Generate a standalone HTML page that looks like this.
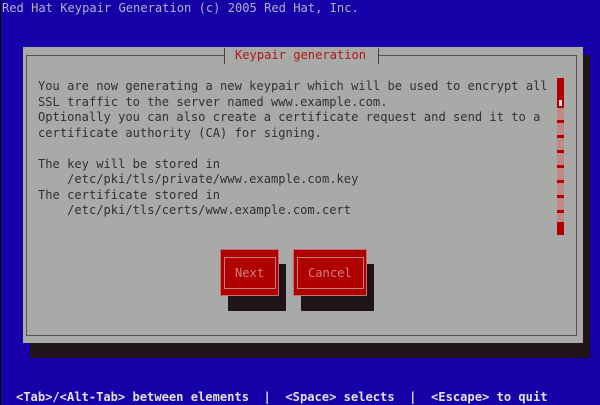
<!DOCTYPE html>
<html><head><style>
*{margin:0;padding:0;box-sizing:border-box}
body{width:600px;height:405px;background:#1800a8;position:relative;overflow:hidden;font-family:"DejaVu Sans Mono","Liberation Mono",monospace;font-size:12.1px}
.a{position:absolute}
.t{position:absolute;white-space:pre;line-height:16px}
</style></head><body>
<div class="a" style="left:0;top:0;width:1px;height:405px;background:#000"></div>
<div class="t" style="left:2px;top:0;color:#b0b0d0">Red Hat Keypair Generation (c) 2005 Red Hat, Inc.</div>
<div class="a" style="left:30px;top:55px;width:560px;height:303px;background:#201418"></div>
<div class="a" style="left:23px;top:47px;width:560px;height:296px;background:#a8aaa8"></div>
<div class="a" style="left:26px;top:55px;width:551px;height:281px;border:1px solid #5a5050"></div>
<div class="a" style="left:224px;top:48px;width:155px;height:16px;background:#a8aaa8;border-left:1px solid #4a4040;border-right:1px solid #4a4040"></div>
<div class="t" style="left:235px;top:47px;color:#b01818">Keypair generation</div>
<div class="t" style="left:38px;top:79px;color:#303030;line-height:15.5px">You are now generating a new keypair which will be used to encrypt all
SSL traffic to the server named www.example.com.
Optionally you can also create a certificate request and send it to a
certificate authority (CA) for signing.

The key will be stored in
    /etc/pki/tls/private/www.example.com.key
The certificate stored in
    /etc/pki/tls/certs/www.example.com.cert</div>
<div class="a" style="left:557px;top:78px;width:7px;height:157px;background:repeating-linear-gradient(#c08888 0 12px,#b00000 12px 15px)"></div>
<div class="a" style="left:557px;top:78px;width:7px;height:30px;background:#b00000"></div>
<div class="a" style="left:559px;top:100px;width:3px;height:6px;background:#ddd"></div>
<div class="a" style="left:557px;top:222px;width:7px;height:13px;background:#b00000"></div>
<div class="a" style="left:228px;top:264px;width:58px;height:47px;background:#201418"></div>
<div class="a" style="left:220px;top:249px;width:59px;height:47px;background:#b00000;border:1px solid #c07070"></div>
<div class="a" style="left:224px;top:257px;width:52px;height:32px;border:1px solid #c08080"></div>
<div class="t" style="left:235px;top:265px;color:#c88080">Next</div>
<div class="a" style="left:301px;top:264px;width:73px;height:47px;background:#201418"></div>
<div class="a" style="left:293px;top:249px;width:74px;height:47px;background:#b00000;border:1px solid #c07070"></div>
<div class="a" style="left:297px;top:257px;width:67px;height:32px;border:1px solid #c08080"></div>
<div class="t" style="left:308px;top:265px;color:#c88080">Cancel</div>
<div class="t" style="left:16px;top:389px;color:#e0e0e0;font-weight:bold">&lt;Tab&gt;/&lt;Alt-Tab&gt; between elements  |  &lt;Space&gt; selects  |  &lt;Escape&gt; to quit</div>
</body></html>
